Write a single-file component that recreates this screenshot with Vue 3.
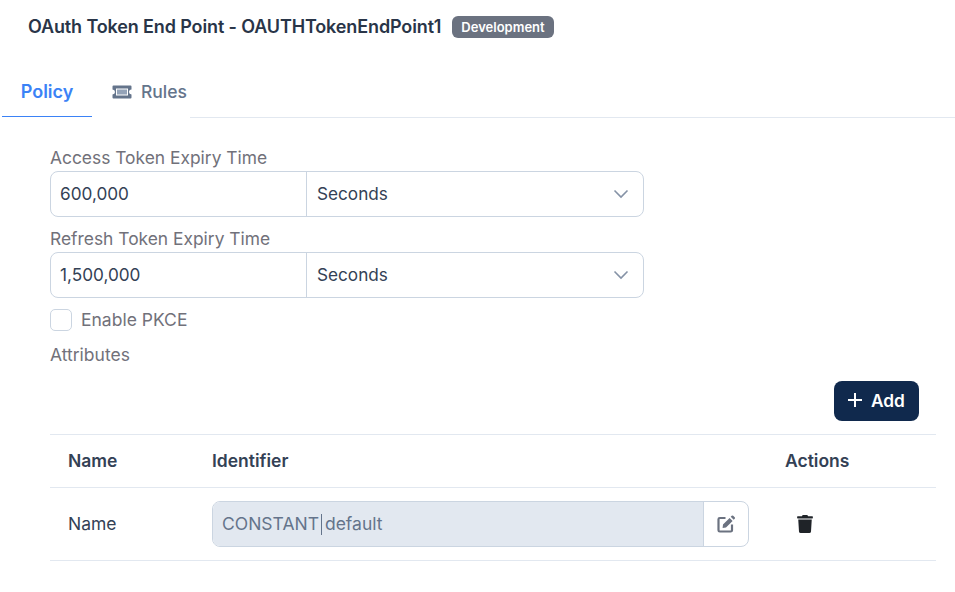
<template>
  <div class="page">
    <div class="title-row">
      <h1>OAuth Token End Point - OAUTHTokenEndPoint1</h1>
      <span class="badge">Development</span>
    </div>

    <div class="tabs">
      <div class="tab active">Policy</div>
      <div class="tab rules">
        <svg width="20" height="14" viewBox="0 0 20 14">
          <path fill="#64748b" fill-rule="evenodd" d="M1.5 0.5h17a1 1 0 0 1 1 1v3a2.5 2.5 0 0 0 0 5v3a1 1 0 0 1-1 1h-17a1 1 0 0 1-1-1v-3a2.5 2.5 0 0 0 0-5v-3a1 1 0 0 1 1-1zM4 3.5v7h12v-7z" />
          <rect x="5" y="4.5" width="10" height="5" fill="#94a3b8" />
        </svg>
        Rules
      </div>
      <div class="tab-fill"></div>
    </div>

    <div class="content">
      <div class="form">
        <template v-for="field in fields" :key="field.label">
          <label class="field-label">{{ field.label }}</label>
          <div class="input-group">
            <div class="value">{{ field.value }}</div>
            <div class="select">
              <span>Seconds</span>
              <svg width="16" height="16" viewBox="0 0 16 16">
                <path d="M1.5 4.5 8 11l6.5-6.5" fill="none" stroke="#8592a6" stroke-width="1.6" />
              </svg>
            </div>
          </div>
        </template>
        <div class="check-row">
          <span class="checkbox"></span>
          <span class="check-label">Enable PKCE</span>
        </div>
        <div class="attr-label">Attributes</div>
      </div>

      <div class="add-row">
        <button class="add-btn">
          <svg width="16" height="16" viewBox="0 0 16 16">
            <path d="M8 1v14M1 8h14" stroke="#fff" stroke-width="2" />
          </svg>
          Add
        </button>
      </div>

      <table>
        <thead>
          <tr>
            <th class="col-name">Name</th>
            <th class="col-id">Identifier</th>
            <th>Actions</th>
          </tr>
        </thead>
        <tbody>
          <tr v-for="row in rows" :key="row.name">
            <td class="col-name">{{ row.name }}</td>
            <td class="col-id">
              <div class="identifier">
                <div class="id-text">{{ row.type }}<i class="sep"></i>{{ row.value }}</div>
                <div class="edit-btn">
                  <svg width="18" height="18" viewBox="0 0 18 18">
                    <path d="M8.5 3H2.8A1.3 1.3 0 0 0 1.5 4.3v10.9a1.3 1.3 0 0 0 1.3 1.3h10.9a1.3 1.3 0 0 0 1.3-1.3V9.5" fill="none" stroke="#6b7280" stroke-width="2.2" />
                    <path fill="#6b7280" d="M12.6 2.9 15.6 5.9 9 12.5 5.6 13 6 9.5zM13.7 1.8l1-1a1.1 1.1 0 0 1 1.5 0l1.5 1.5a1.1 1.1 0 0 1 0 1.5l-1 1z" />
                  </svg>
                </div>
              </div>
            </td>
            <td class="col-actions">
              <svg class="trash" width="16" height="18" viewBox="0 0 448 512">
                <path fill="#1f2328" d="M432 32H312l-9.4-18.7A24 24 0 0 0 281.1 0H166.8a23.7 23.7 0 0 0-21.4 13.3L136 32H16A16 16 0 0 0 0 48v32a16 16 0 0 0 16 16h416a16 16 0 0 0 16-16V48a16 16 0 0 0-16-16zM53.2 467a48 48 0 0 0 47.9 45h245.8a48 48 0 0 0 47.9-45L416 128H32z" />
              </svg>
            </td>
          </tr>
        </tbody>
      </table>
    </div>
  </div>
</template>

<script setup>
import { ref } from "vue";

const fields = ref([
  { label: "Access Token Expiry Time", value: "600,000" },
  { label: "Refresh Token Expiry Time", value: "1,500,000" },
]);

const rows = ref([{ name: "Name", type: "CONSTANT", value: "default" }]);
</script>

<style>
body {
  background: #fff;
}
</style>

<style scoped>
.page {
  font-family: Inter, "Noto Sans", sans-serif;
  color: #334155;
  width: 955px;
}

.title-row {
  display: flex;
  align-items: center;
  padding: 15px 0 0 28px;
  height: 23px;
}

h1 {
  margin: 0;
  font-size: 18px;
  font-weight: 600;
  letter-spacing: -0.13px;
  color: #293548;
}

.badge {
  margin-left: 11px;
  background: #6b7280;
  color: #fff;
  font-size: 13px;
  font-weight: 600;
  padding: 0 9px;
  height: 22px;
  line-height: 22px;
  border-radius: 6px;
}

.tabs {
  display: flex;
  margin-top: 29px;
  margin-left: 2px;
  height: 51px;
}

.tab {
  display: flex;
  align-items: center;
  gap: 9px;
  font-size: 17.5px;
  font-weight: 500;
  color: #64748b;
  padding-bottom: 2px;
  box-sizing: border-box;
}

.active {
  width: 90px;
  height: 50px;
  padding-bottom: 0;
  justify-content: center;
  font-size: 18px;
  color: #3b82f6;
  font-weight: 600;
  border-bottom: 1px solid #3b82f6;
}

.rules {
  width: 98px;
  padding-left: 20px;
}

.tab-fill {
  flex: 1;
  border-bottom: 1px solid #e2e8f0;
}

.content {
  padding: 30px 19px 0 50px;
}

.form {
  width: 594px;
}

.field-label {
  display: block;
  font-size: 17.4px;
  line-height: 20px;
  color: #71717a;
  margin-bottom: 3px;
}

.input-group {
  display: flex;
  height: 46px;
  box-sizing: border-box;
  border: 1px solid #cbd5e1;
  border-radius: 8px;
  margin-bottom: 12px;
  font-size: 17.2px;
  color: #334155;
}

.value {
  width: 256px;
  box-sizing: border-box;
  padding-left: 9px;
  line-height: 44px;
  border-right: 1px solid #cbd5e1;
}

.select {
  flex: 1;
  display: flex;
  align-items: center;
  justify-content: space-between;
  padding: 0 14px 0 10px;
  line-height: 44px;
}

.check-row {
  display: flex;
  align-items: center;
  gap: 9px;
  margin-top: -1px;
}

.checkbox {
  width: 20px;
  height: 20px;
  border: 1px solid #cbd5e1;
  border-radius: 5px;
}

.check-label,
.attr-label {
  font-size: 17.5px;
  line-height: 22px;
  color: #71717a;
}

.attr-label {
  margin-top: 13px;
}

.add-row {
  display: flex;
  justify-content: flex-end;
  margin-top: 15px;
  padding-right: 17px;
}

.add-btn {
  display: flex;
  align-items: center;
  gap: 8px;
  height: 40px;
  width: 85px;
  padding: 0 0 2px 13px;
  border: none;
  border-radius: 8px;
  background: #10294d;
  color: #fff;
  font-family: inherit;
  font-size: 17.3px;
  font-weight: 600;
}

table {
  width: 886px;
  table-layout: fixed;
  margin-top: 13px;
  border-collapse: collapse;
  font-size: 17.5px;
}

th,
td {
  padding: 0;
  text-align: left;
  border-top: 1px solid #e2e8f0;
  border-bottom: 1px solid #e2e8f0;
}

th {
  height: 51px;
  padding-bottom: 1px;
  font-weight: 600;
  color: #334155;
}

td {
  height: 72px;
  font-weight: 400;
}

.col-name {
  width: 162px;
  padding-left: 18px;
  padding-bottom: 1px;
  box-sizing: border-box;
}

.col-id {
  width: 573px;
}

.col-actions {
  padding-left: 12px;
}

.trash {
  display: block;
}

.identifier {
  display: flex;
  width: 537px;
  height: 46px;
  box-sizing: border-box;
  border: 1px solid #cbd5e1;
  border-radius: 8px;
  overflow: hidden;
}

.id-text {
  flex: 1;
  background: #e2e8f0;
  color: #64748b;
  padding-left: 9px;
  line-height: 44px;
  font-size: 17.5px;
  border-right: 1px solid #cbd5e1;
}

.sep {
  display: inline-block;
  width: 1px;
  height: 21px;
  background: #64748b;
  margin: 0 3px 0 2px;
  vertical-align: -5px;
}

.edit-btn {
  width: 44px;
  display: flex;
  align-items: center;
  justify-content: center;
}
</style>
